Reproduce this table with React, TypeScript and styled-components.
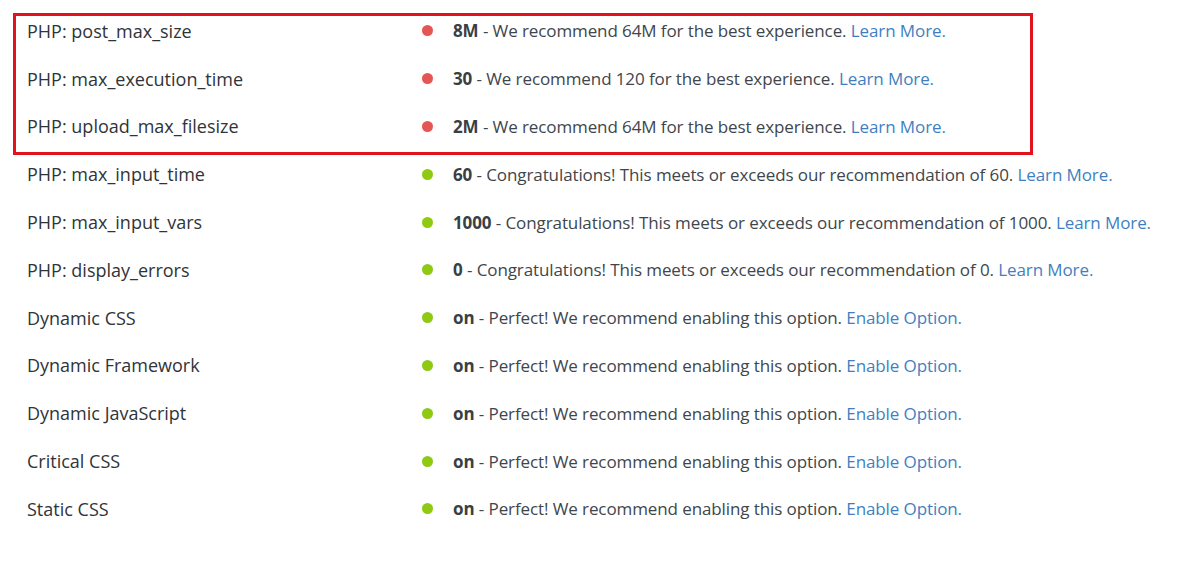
import React from "react";
import styled, { createGlobalStyle } from "styled-components";

const Global = createGlobalStyle`
  html, body { margin: 0; padding: 0; background: #ffffff; }
  body { font-family: "Open Sans", "Noto Sans", sans-serif; color: #3b4045; }
`;

const Page = styled.div`
  position: relative;
  width: 1180px;
  height: 572px;
  padding: 7px 0 0 27px;
  box-sizing: border-box;
`;

const List = styled.div`
  display: flex;
  flex-direction: column;
`;

const Row = styled.div`
  display: flex;
  align-items: center;
  height: 47.8px;
`;

const Label = styled.div`
  width: 395px;
  font-size: 18px;
  color: #2f3439;
  white-space: nowrap;
`;

const Dot = styled.span<{ $ok: boolean }>`
  width: 11px;
  height: 11px;
  border-radius: 50%;
  background: ${(p) => (p.$ok ? "#8fc912" : "#e45555")};
  margin-right: 20px;
  flex: none;
`;

const Message = styled.div`
  font-size: 17px;
  color: #40464c;
  white-space: nowrap;
  letter-spacing: -0.1px;
`;

const Value = styled.strong`
  font-weight: 700;
  color: #3a3f44;
`;

const Link = styled.a`
  color: #3f7fc1;
  text-decoration: none;
`;

const Highlight = styled.div`
  position: absolute;
  left: 13px;
  top: 13px;
  width: 1020px;
  height: 142px;
  border: 3px solid #e3131b;
  box-sizing: border-box;
  pointer-events: none;
`;

type Item = { label: string; ok: boolean; value: string; text: string; link: string };

const items: Item[] = [
  { label: "PHP: post_max_size", ok: false, value: "8M", text: "We recommend 64M for the best experience.", link: "Learn More." },
  { label: "PHP: max_execution_time", ok: false, value: "30", text: "We recommend 120 for the best experience.", link: "Learn More." },
  { label: "PHP: upload_max_filesize", ok: false, value: "2M", text: "We recommend 64M for the best experience.", link: "Learn More." },
  { label: "PHP: max_input_time", ok: true, value: "60", text: "Congratulations! This meets or exceeds our recommendation of 60.", link: "Learn More." },
  { label: "PHP: max_input_vars", ok: true, value: "1000", text: "Congratulations! This meets or exceeds our recommendation of 1000.", link: "Learn More." },
  { label: "PHP: display_errors", ok: true, value: "0", text: "Congratulations! This meets or exceeds our recommendation of 0.", link: "Learn More." },
  { label: "Dynamic CSS", ok: true, value: "on", text: "Perfect! We recommend enabling this option.", link: "Enable Option." },
  { label: "Dynamic Framework", ok: true, value: "on", text: "Perfect! We recommend enabling this option.", link: "Enable Option." },
  { label: "Dynamic JavaScript", ok: true, value: "on", text: "Perfect! We recommend enabling this option.", link: "Enable Option." },
  { label: "Critical CSS", ok: true, value: "on", text: "Perfect! We recommend enabling this option.", link: "Enable Option." },
  { label: "Static CSS", ok: true, value: "on", text: "Perfect! We recommend enabling this option.", link: "Enable Option." },
];

export default function App() {
  return (
    <>
      <Global />
      <Page>
        <List>
          {items.map((it) => (
            <Row key={it.label}>
              <Label>{it.label}</Label>
              <Dot $ok={it.ok} />
              <Message>
                <Value>{it.value}</Value> - {it.text} <Link href="#">{it.link}</Link>
              </Message>
            </Row>
          ))}
        </List>
        <Highlight />
      </Page>
    </>
  );
}
